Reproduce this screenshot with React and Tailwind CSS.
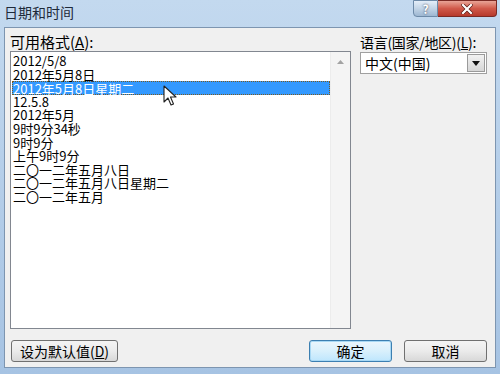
import React from 'react';

const formats = [
  '2012/5/8',
  '2012年5月8日',
  '2012年5月8日星期二',
  '12.5.8',
  '2012年5月',
  '9时9分34秒',
  '9时9分',
  '上午9时9分',
  '二〇一二年五月八日',
  '二〇一二年五月八日星期二',
  '二〇一二年五月',
];

const cjk = { fontFamily: '"Noto Sans CJK SC", "Noto Sans", sans-serif' };

export default function App() {
  return (
    <div className="w-[500px] h-[374px] overflow-hidden flex flex-col bg-gradient-to-b from-[#c3d9ef] to-[#a6c3e3]" style={cjk}>
      {/* Title bar */}
      <div className="h-[27px] flex items-start justify-between pl-[4px] pr-[3px]">
        <div className="text-[14px] leading-[24px] text-[#1e2a3a]">日期和时间</div>
        <div className="flex">
          <div className="w-[25px] h-[17px] rounded-bl-[4px] border border-[#6d8aa8] bg-gradient-to-b from-[#e4eef8] via-[#c2d4e6] to-[#9db7d2] flex items-center justify-center text-white font-bold text-[12px] leading-none" style={{ textShadow: '0 0 2px #334' }}>?</div>
          <div className="w-[59px] h-[17px] rounded-br-[4px] border border-l-0 border-[#7a2a24] bg-gradient-to-b from-[#e8a497] via-[#d0594a] to-[#b63a2c] flex items-center justify-center">
            <svg width="12" height="10" viewBox="0 0 12 10">
              <path d="M2 1 L10 9 M10 1 L2 9" stroke="#5a1a14" strokeWidth="3.6" strokeLinecap="square" />
              <path d="M2 1 L10 9 M10 1 L2 9" stroke="#fff" strokeWidth="2.2" strokeLinecap="square" />
            </svg>
          </div>
        </div>
      </div>

      {/* Dialog body */}
      <div className="flex-1 mx-[4px] mb-[6px] bg-[#f0f0f0] border border-[#7d95b0] flex flex-col pl-[5px] pr-[7px] pt-[5px]">
        <div className="flex gap-[9px]">
          {/* Formats */}
          <div className="flex flex-col w-[341px]">
            <div className="h-[18px] text-[15px] leading-[18px] text-black">可用格式(<span className="underline">A</span>):</div>
            <div className="relative h-[278px] bg-white border border-[#828790] flex">
              <div className="flex-1 pt-[2px] pl-[1px]">
                {formats.map((f, i) => (
                  <div
                    key={i}
                    className={
                      i === 2
                        ? 'h-[13.6px] leading-[13px] text-[13px] bg-[#3399ff] text-white border border-dotted border-[#7a5a20] pl-0'
                        : 'h-[13.6px] leading-[13.6px] text-[13px] text-black pl-[1px]'
                    }
                  >
                    {f}
                  </div>
                ))}
              </div>
              <div className="w-[20px] bg-[#f4f4f4] border-l border-[#ececec] flex flex-col items-center pt-[8px]">
                <svg width="7" height="4" viewBox="0 0 7 4"><path d="M0 4 L3.5 0 L7 4 Z" fill="#a3a3a3" /></svg>
              </div>
              {/* Mouse pointer */}
              <svg className="absolute left-[152px] top-[33px]" width="15" height="22" viewBox="0 0 15 22">
                <path d="M1 1 L1 17 L5 13 L8 20 L10.5 19 L7.5 12 L13 12 Z" fill="#fff" stroke="#222" strokeWidth="1.1" strokeLinejoin="round" />
              </svg>
            </div>
          </div>

          {/* Language */}
          <div className="flex flex-col w-[127px]">
            <div className="h-[19px] text-[14px] leading-[19px] text-black whitespace-nowrap tracking-[-0.3px]">语言(国家/地区)(<span className="underline">L</span>):</div>
            <div className="h-[22px] bg-white border border-[#a0a0a0] flex items-stretch">
              <div className="flex-1 text-[14px] leading-[20px] pl-[4px] text-black">中文(中国)</div>
              <div className="w-[18px] m-[1px] border border-[#9a9a9a] bg-gradient-to-b from-[#f2f2f2] to-[#d6d6d6] flex items-center justify-center">
                <svg width="8" height="5" viewBox="0 0 8 5"><path d="M0 0 L8 0 L4 5 Z" fill="#111" /></svg>
              </div>
            </div>
          </div>
        </div>

        {/* Buttons */}
        <div className="flex items-start mt-[11px]">
          <button className="w-[107px] h-[22px] ml-[1px] rounded-[3px] border border-[#707070] bg-gradient-to-b from-[#f4f4f4] via-[#ebebeb] to-[#d8d8d8] text-[14px] leading-[18px] text-black">
            设为默认值(<span className="underline">D</span>)
          </button>
          <div className="flex-1" />
          <button className="w-[83px] h-[22px] rounded-[3px] border border-[#3c7fb1] bg-gradient-to-b from-[#eaf6fd] via-[#d9f0fc] to-[#bee6fd] text-[14px] leading-[18px] text-black shadow-[inset_0_0_0_1px_#a8d8f4]">
            确定
          </button>
          <button className="w-[83px] h-[22px] ml-[12px] mr-[1px] rounded-[3px] border border-[#707070] bg-gradient-to-b from-[#f4f4f4] via-[#ebebeb] to-[#d8d8d8] text-[14px] leading-[18px] text-black">
            取消
          </button>
        </div>
      </div>
    </div>
  );
}
